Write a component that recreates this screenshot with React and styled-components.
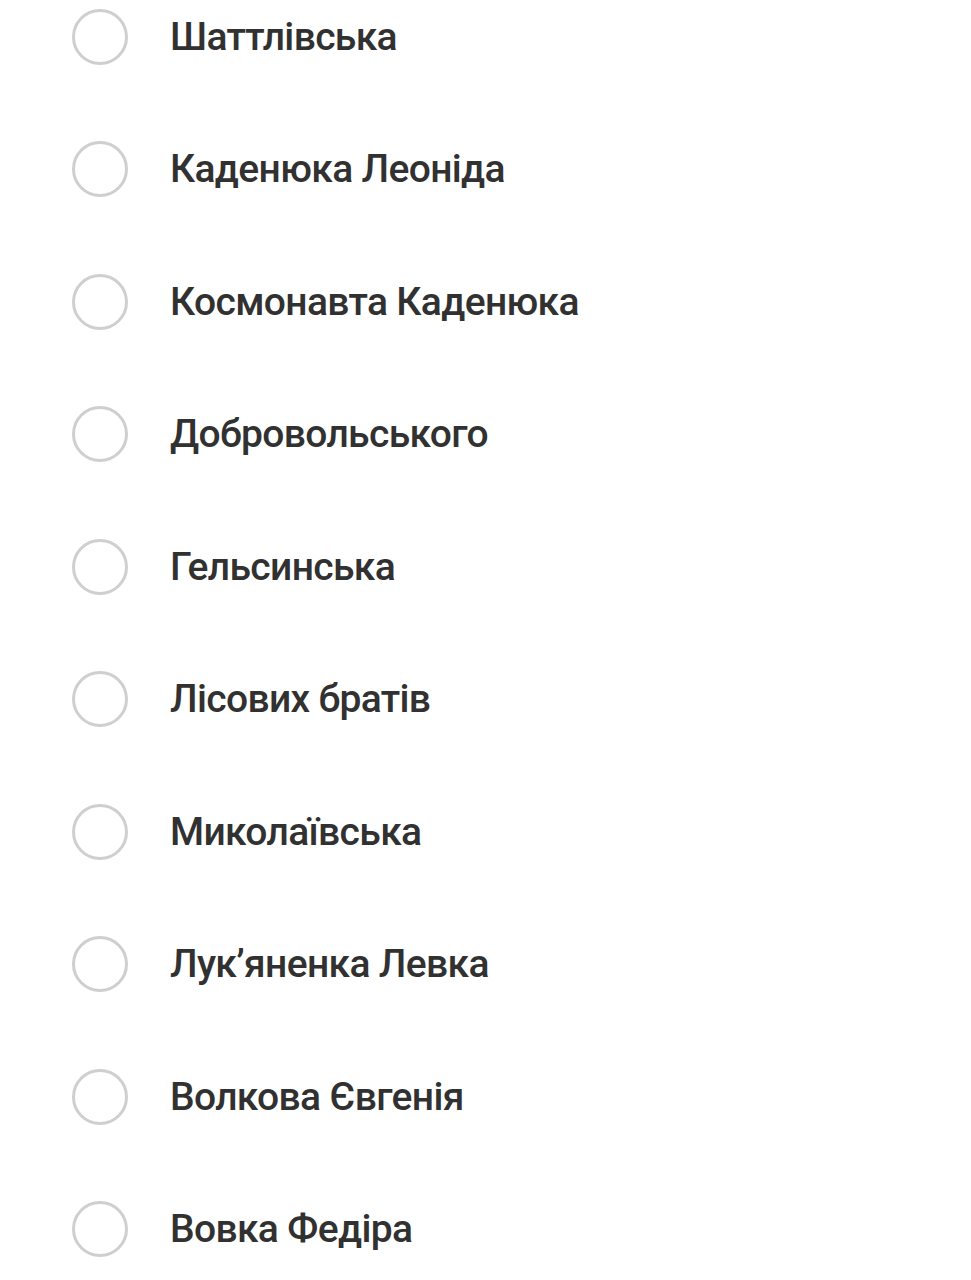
import React from "react";
import styled, { createGlobalStyle } from "styled-components";

const GlobalStyle = createGlobalStyle`
  html, body {
    margin: 0;
    padding: 0;
    background: #ffffff;
  }
  body {
    font-family: Roboto, "Noto Sans", "Liberation Sans", sans-serif;
  }
`;

const List = styled.div`
  display: flex;
  flex-direction: column;
  gap: 76.44px;
  padding: 9px 0 0 72px;
`;

const Row = styled.label`
  display: flex;
  align-items: center;
  height: 56px;
  gap: 42px;
  cursor: pointer;
`;

const Radio = styled.span`
  box-sizing: border-box;
  width: 56px;
  height: 56px;
  flex: none;
  border-radius: 50%;
  border: 3px solid #cfcfcf;
  background: #fff;
`;

const Name = styled.span`
  font-size: 39px;
  font-weight: 500;
  color: #313131;
  letter-spacing: -0.65px;
  white-space: nowrap;
`;

const streets = [
  "Шаттлівська",
  "Каденюка Леоніда",
  "Космонавта Каденюка",
  "Добровольського",
  "Гельсинська",
  "Лісових братів",
  "Миколаївська",
  "Лук’яненка Левка",
  "Волкова Євгенія",
  "Вовка Федіра",
];

const App = () => {
  return (
    <>
      <GlobalStyle />
      <List>
        {streets.map((street) => (
          <Row key={street}>
            <Radio />
            <Name>{street}</Name>
          </Row>
        ))}
      </List>
    </>
  );
};

export default App;
